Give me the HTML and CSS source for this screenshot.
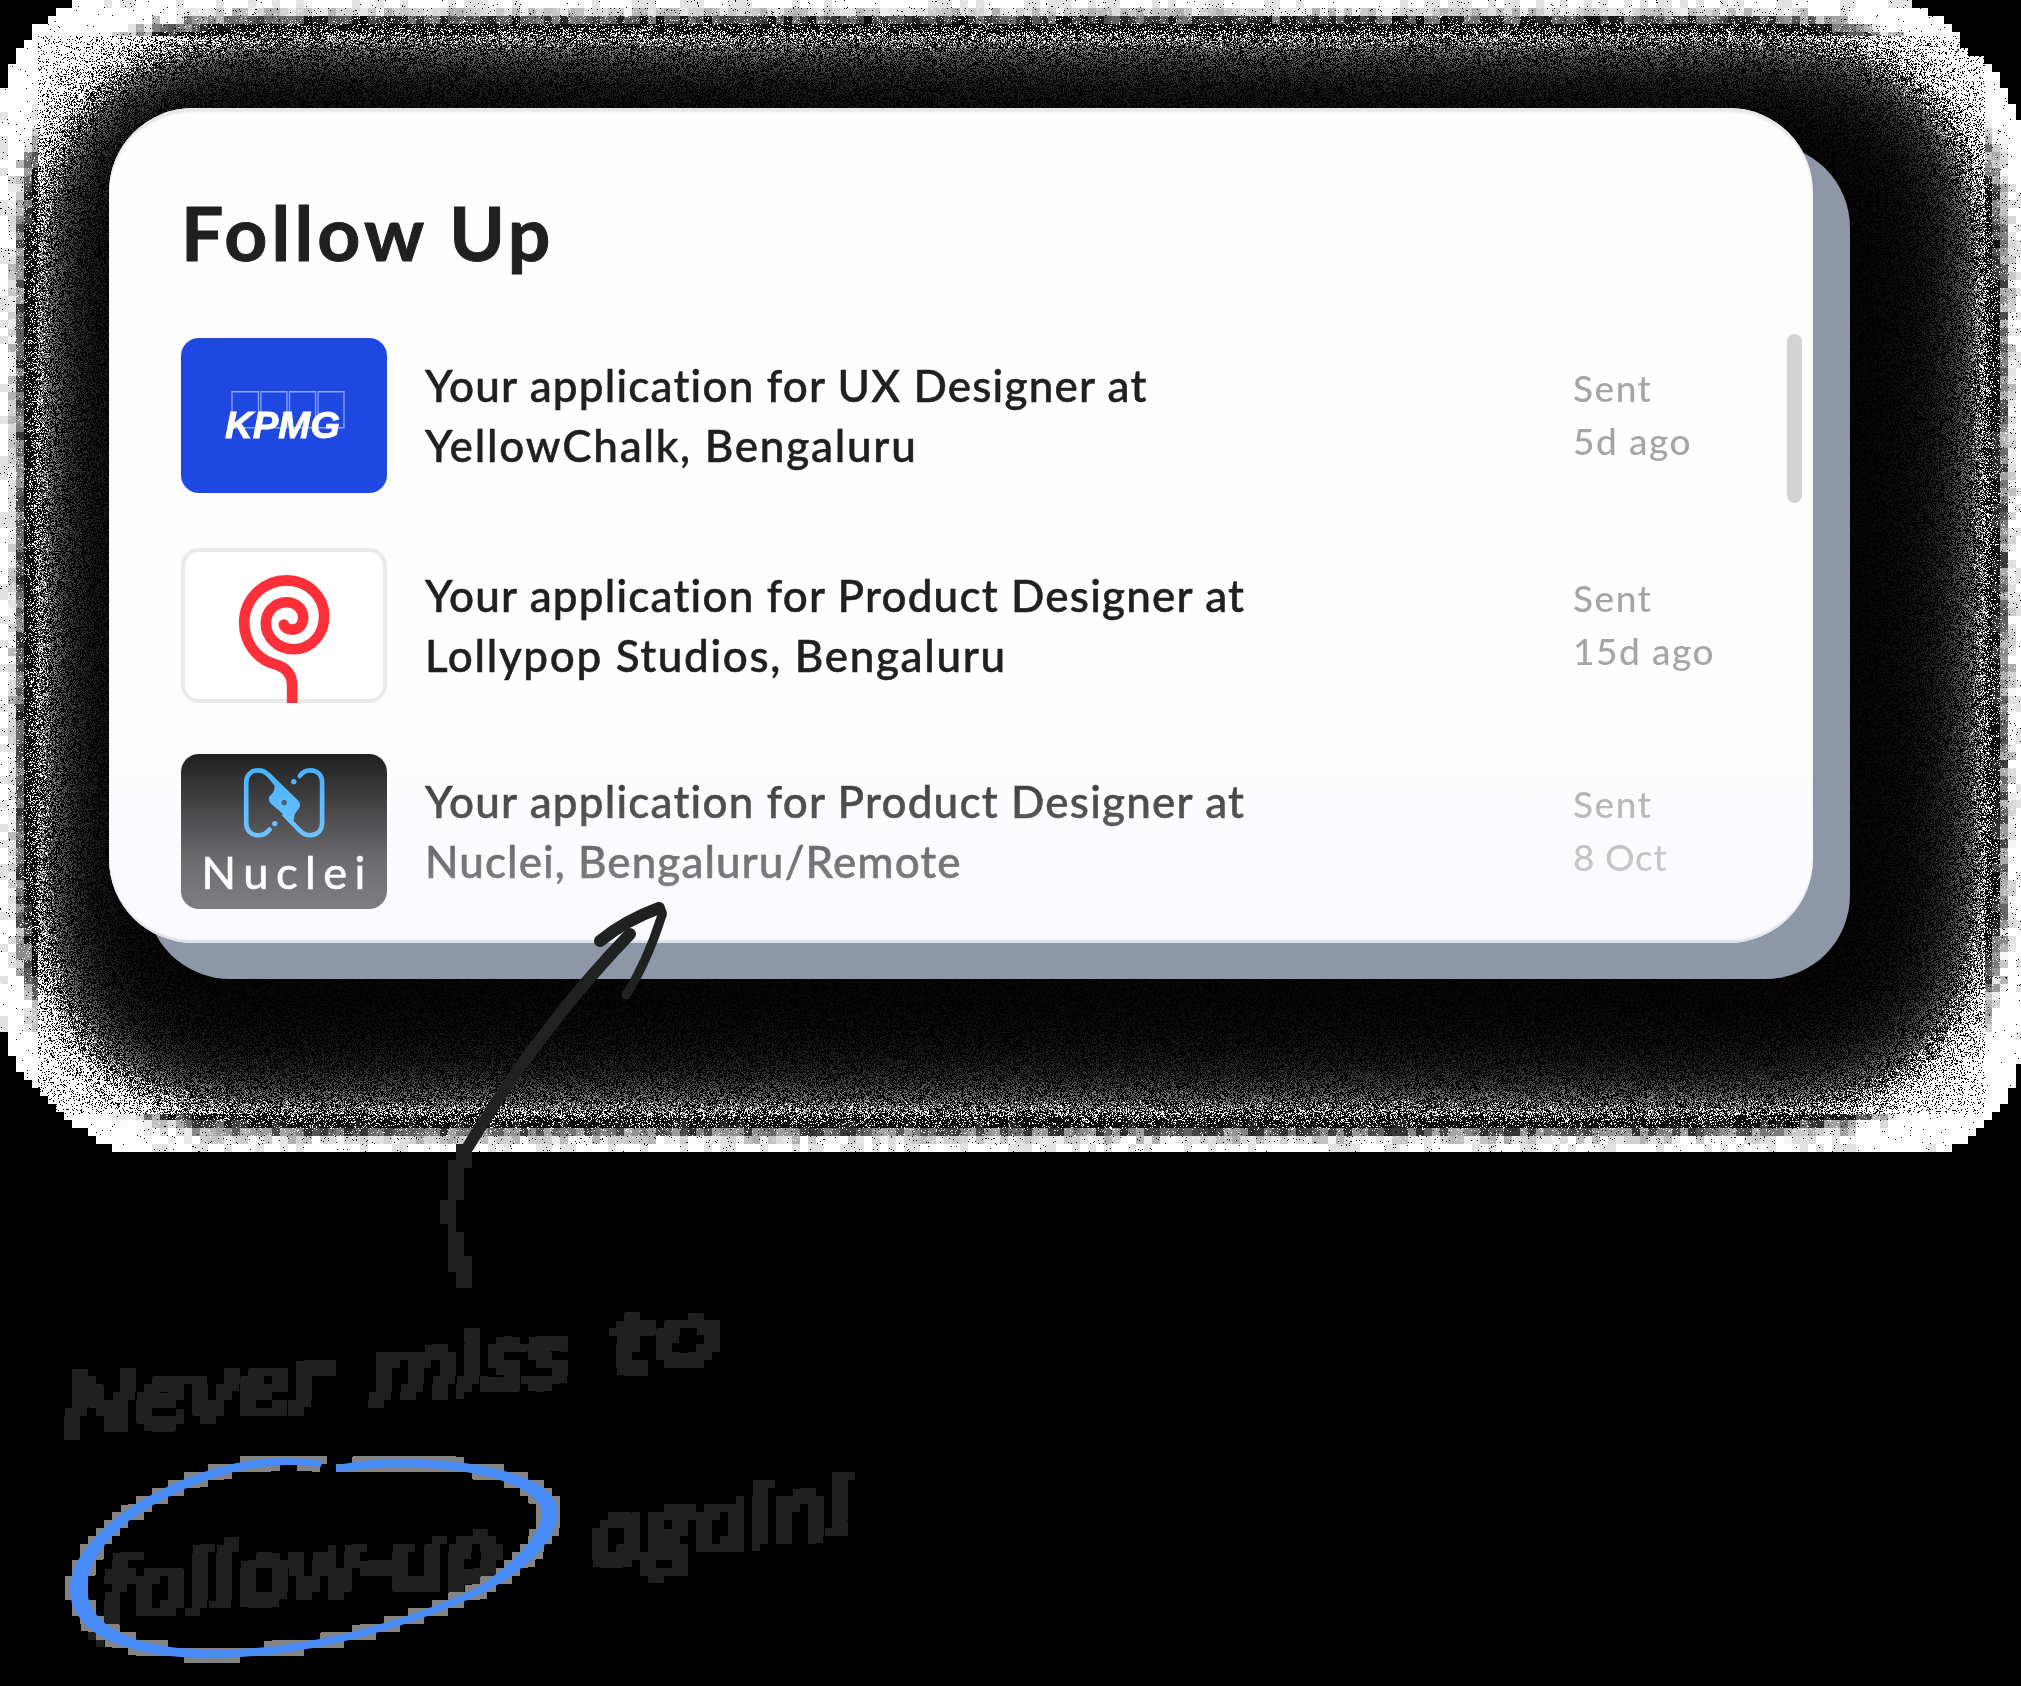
FILE: index.html
```html
<!DOCTYPE html>
<html lang="en">
<head>
<meta charset="utf-8">
<title>Follow Up</title>
<link rel="stylesheet" href="styles.css">
</head>
<body>
<main class="stage">
  <canvas class="halo" id="halo" width="2021" height="1152"></canvas>
  <section class="card">
    <h1 class="title">Follow Up</h1>
    <div class="scrollbar"></div>
    <div class="list">
      <article class="row">
        <svg class="logo logo-kpmg" viewBox="0 0 206 154">
          <g fill="none" stroke="#8ba4f5" stroke-width="1.3">
            <path d="M51 53.500h26.500v36h-26.500zM80 53.500h26v36h-26zM108.500 53.500h26v36h-26zM137 53.500h26v36h-26z"/>
          </g>
          <text class="kpmg" x="44" y="99.500" textLength="115" lengthAdjust="spacingAndGlyphs">KPMG</text>
        </svg>
        <p class="text"><span class="ls-a">Your application for UX Designer at</span><br><span class="ls-b">YellowChalk, Bengaluru</span></p>
        <p class="meta">Sent<br>5d ago</p>
      </article>
      <article class="row">
        <svg class="logo logo-lolly" viewBox="31.5 24 618 464">
          <path fill="none" stroke="#fd2f39" stroke-width="32" d="M365 490V437C365 398 340 380 310 372C255 355 221 305 221 248C221 178 278 121 348 121C410 121 461 168 461 228C461 284 423 328 370 328C324 328 286 294 286 250C286 215 313 187 348 187C376 187 398 207 398 232C398 255 384 269 367 269C352 269 343 264 340 254"/>
          <circle cx="340" cy="254" r="16" fill="#fd2f39"/>
        </svg>
        <p class="text"><span class="ls-a">Your application for Product Designer at</span><br><span class="ls-d">Lollypop Studios, Bengaluru</span></p>
        <p class="meta">Sent<br>15d ago</p>
      </article>
      <article class="row row-last">
        <svg class="logo logo-nuclei" viewBox="31.5 643 618 464">
          <g fill="none" stroke="#31abff" stroke-width="14" stroke-linecap="round" stroke-linejoin="round">
            <path d="M297 870C288 882 278 887 263 887C241 887 227 872 227 850V728C227 706 242 692 263 692C277 692 285 697 294 706L340 753"/>
            <path d="M388 709C396 697 404 692 419 692C441 692 455 706 455 728V850C455 872 440 887 419 887C405 887 397 882 388 873L342 826"/>
          </g>
          <path fill="#31abff" d="M300 702L383 783Q395 798 383 810Q371 821 371 838L366 848L300 791Q289 777 300 767Q314 755 312 738L290 710Z"/>
          <circle cx="370" cy="726" r="8" fill="#31abff"/>
          <circle cx="313" cy="852" r="8" fill="#31abff"/>
          <circle cx="341" cy="789" r="8" fill="#26303a"/>
          <text class="nuclei" x="93" y="1047" textLength="492">Nuclei</text>
        </svg>
        <p class="text"><span class="ls-a">Your application for Product Designer at</span><br><span class="ls-e">Nuclei, Bengaluru/Remote</span></p>
        <p class="meta"><span>Sent</span><br><span class="ls-c">8 Oct</span></p>
      </article>
    </div>
  </section>

  <svg class="notes" viewBox="0 0 2021 1686">
    <defs>
      <filter id="ink" filterUnits="userSpaceOnUse" x="0" y="1280" width="904" height="400" color-interpolation-filters="sRGB">
        <feMorphology in="SourceGraphic" operator="dilate" radius="2" result="fat"/>
        <feFlood x="3" y="1283" width="2" height="2" flood-color="#000" result="dot"/>
        <feComposite in="dot" in2="dot" operator="over" x="0" y="1280" width="8" height="8" result="cell"/>
        <feTile in="cell" result="grid"/>
        <feComposite in="fat" in2="grid" operator="in"/>
        <feMorphology operator="dilate" radius="3"/>
        <feComponentTransfer><feFuncA type="discrete" tableValues="0 1 1 1"/></feComponentTransfer>
      </filter>
      <path id="ring" d="M322 1461C240 1447 160 1485 120 1515C88 1540 70 1565 70 1590C70 1625 110 1658 210 1658C300 1658 400 1632 485 1592C535 1565 558 1535 558 1512C558 1480 490 1459 400 1459C370 1459 350 1463 336 1465L336 1472C355 1470 375 1467 405 1467C490 1468 542 1490 542 1514C542 1530 520 1560 478 1587C400 1625 300 1649 220 1650C130 1650 88 1625 87 1588C87 1565 105 1540 130 1520C170 1492 240 1456 321 1467Z"/>
    </defs>
    <g fill="none" stroke="#202121" stroke-linecap="round" stroke-linejoin="round">
      <path stroke-width="12" d="M630 934C600 965 560 1010 513 1077C497 1101 480 1127 468 1147"/>
      <path stroke-width="12" d="M600 941C617 927 640 915 659 908"/>
      <path stroke-width="9" d="M660 909Q664 912 661 918C652 946 642 970 626 995"/>
    </g>
    <path fill="#202020" d="M456 1144h16v24h-8v32h-8v32h8v24h8v32h-16v-16h-8v-48h-8v-24h8v-40h8z"/>
    <g filter="url(#ink)">
      <text class="hand" transform="translate(64 1436) rotate(-6)" textLength="270" lengthAdjust="spacingAndGlyphs">Never</text>
      <text class="hand" transform="translate(372 1402) rotate(-6)" textLength="200" lengthAdjust="spacingAndGlyphs">miss</text>
      <text class="hand" transform="translate(614 1372) rotate(-6)" textLength="112" lengthAdjust="spacingAndGlyphs">to</text>
      <text class="hand" transform="translate(104 1620) rotate(-6)" textLength="402" lengthAdjust="spacingAndGlyphs">follow-up</text>
      <text class="hand" transform="translate(592 1565) rotate(-7)" textLength="264" lengthAdjust="spacingAndGlyphs">again!</text>
    </g>
    <use href="#ring" fill="#838383" filter="url(#ink)"/>
    <use href="#ring" fill="#478bf9"/>
  </svg>
</main>
<script src="halo.js"></script>
</body>
</html>
```
FILE: styles.css
```css
* { box-sizing: border-box; }
body { margin: 0; background: #000; font-family: "Lato", "Open Sans", sans-serif; color: #202020; }
.stage { position: relative; width: 2021px; height: 1686px; overflow: hidden; padding: 108px 0 0 109px; }
.halo { position: absolute; left: 0; top: 0; }
.card {
  position: relative; width: 1704px; height: 835px; padding: 79px 0 0 72px;
  border-radius: 84px;
  background: linear-gradient(#fefefe 0, #fefefe 620px, #fbfaff 790px);
  box-shadow: inset 0 4px 2px #e9e7e8, inset 0 -3px 2px #dedfe9, 37px 36px 0 #8d97a7;
}
.card::after {
  content: ""; position: absolute; inset: 628px 0 4px; border-radius: 0 0 80px 80px;
  background: linear-gradient(rgba(251,250,255,0), rgba(251,250,255,.4) 130px, rgba(251,250,255,.5));
}
.title { margin: 0; font-size: 75px; line-height: 90px; font-weight: 700; letter-spacing: 4.2px; -webkit-text-stroke: 1px #202020; }
.scrollbar { position: absolute; left: 1678px; top: 226px; width: 15px; height: 169px; border-radius: 8px; background: #d3d3d3; }
.list { display: flex; flex-direction: column; gap: 55.5px; margin-top: 61px; }
.row { display: grid; grid-template-columns: 206px 1148px 200px; column-gap: 38px; align-items: center; height: 154.500px; }
.row .meta { margin-left: -38px; padding-bottom: 2px; }
.row-last { margin-top: -4px; }
.logo { display: block; width: 206px; height: 154.500px; border-radius: 18px; }
.logo-kpmg { background: #1f48e3; }
.logo-lolly { box-shadow: inset 0 0 0 4px #e9e9e9; background: #fff; }
.logo-nuclei { background: #131314; }
.kpmg { font: italic 700 36px "Liberation Sans", Arial, sans-serif; fill: #fff; stroke: #fff; stroke-width: .8px; }
.nuclei { font: 400 136px "Lato", sans-serif; fill: #fff; stroke: #fff; stroke-width: 2px; }
.text { margin: 0; font-size: 44px; line-height: 60px; font-weight: 500; white-space: nowrap; -webkit-text-stroke: .5px #202020; }
.meta { margin: 0; font-size: 37px; line-height: 53px; font-weight: 500; color: #a5a5a5; letter-spacing: 1.5px; white-space: nowrap; }
.ls-a { letter-spacing: 1.18px; }
.ls-b { letter-spacing: 1.76px; }
.ls-c { letter-spacing: .6px; }
.ls-d { letter-spacing: 1.66px; }
.ls-e { letter-spacing: 1.05px; }
.notes { position: absolute; left: 0; top: 0; width: 2021px; height: 1686px; }
.hand { font: italic 400 82px "Open Sans", sans-serif; fill: #202020; stroke: #202020; stroke-width: 2px; }
```
FILE: halo.js
```javascript
(function () {
  var W = 2021, H = 1152, cv = document.getElementById('halo'), g = cv.getContext('2d');
  var img = g.createImageData(W, H), px = img.data, seed = 12345;
  function rnd() { seed = (Math.imul(seed, 1664525) + 1013904223) >>> 0; return seed / 4294967296; }
  // normal distribution function, logistic-style approximation
  function cdf(z) { return 1 / (1 + Math.exp(-z * (1.5976 + 0.070566 * z * z))); }
  // stepped corner outlines, one entry per 8px row
  var TL = [72, 56, 48, 32, 32, 24, 16, 16, 8, 8, 8];
  var TR = [1912, 1928, 1944, 1952, 1960, 1960, 1968, 1984, 1992, 2000, 2000, 2008, 2008, 2016, 2016];
  var BL = [112, 96, 88, 72, 64, 56, 48, 40, 32, 24, 16, 16, 8, 8, 8];
  var BR = [1952, 1968, 1976, 1984, 1992, 2000, 2008, 2008, 2016, 2016, 2016];
  var s = 60, ax = [], ay = [], x, y;
  for (x = 0; x < W; x++) ax[x] = cdf((x - 163) / s) * cdf((1859 - x) / s);
  for (y = 0; y < H; y++) ay[y] = cdf((y - 161) / s) * cdf((988 - y) / s);
  var cols = Math.ceil(W / 8), block = [];
  for (var j = 0; j < H / 8; j++) for (var i = 0; i < cols; i++) {
    var bx = i * 8 + 4, by = j * 8 + 4;
    var a0 = 72 * ax[Math.min(bx, W - 1)] * ay[by];
    var d = Math.min(bx, 2021 - bx, by, H - by);
    var t = (a0 - 0.28) / 0.5 + (rnd() - 0.5) * 0.5;
    if (d < 8) t = rnd() < 0.3 ? 0.12 : -0.1;
    else if (d < 16) t = Math.min(t, 0.05 + rnd() * 0.3);
    block.push(255 - 245 * Math.max(0, Math.min(1, t)));
  }
  for (y = 0; y < H; y++) {
    var r = y >> 3, b = 143 - r;
    var lo = r < TL.length ? TL[r] : b < BL.length ? BL[b] : 0;
    var hi = r < TR.length ? TR[r] : b < BR.length ? BR[b] : W;
    for (x = 0; x < W; x++) {
      var v = 0;
      if (x >= lo && x < hi) {
        var a = 72 * ax[x] * ay[y];
        if (x < 38 || x > 1984 || y < 36 || y > 1113) {
          v = block[r * cols + (x >> 3)];
          var q = rnd(), p = Math.min(0.32, a * a * 0.2);
          if (v < 252) { if (q < p) v = 255; else if (q > 0.97) v = 0; }
          else if (q > 0.995) v = 0;
        } else {
          var n = Math.max(0, Math.round(a + (rnd() - 0.5) * 1.6));
          v = n === 0 ? 255 : rnd() < 0.5 ? 255 / n : 0;
        }
      }
      var k = (y * W + x) * 4;
      px[k] = px[k + 1] = px[k + 2] = v;
      px[k + 3] = 255;
    }
  }
  g.putImageData(img, 0, 0);
})();
```
